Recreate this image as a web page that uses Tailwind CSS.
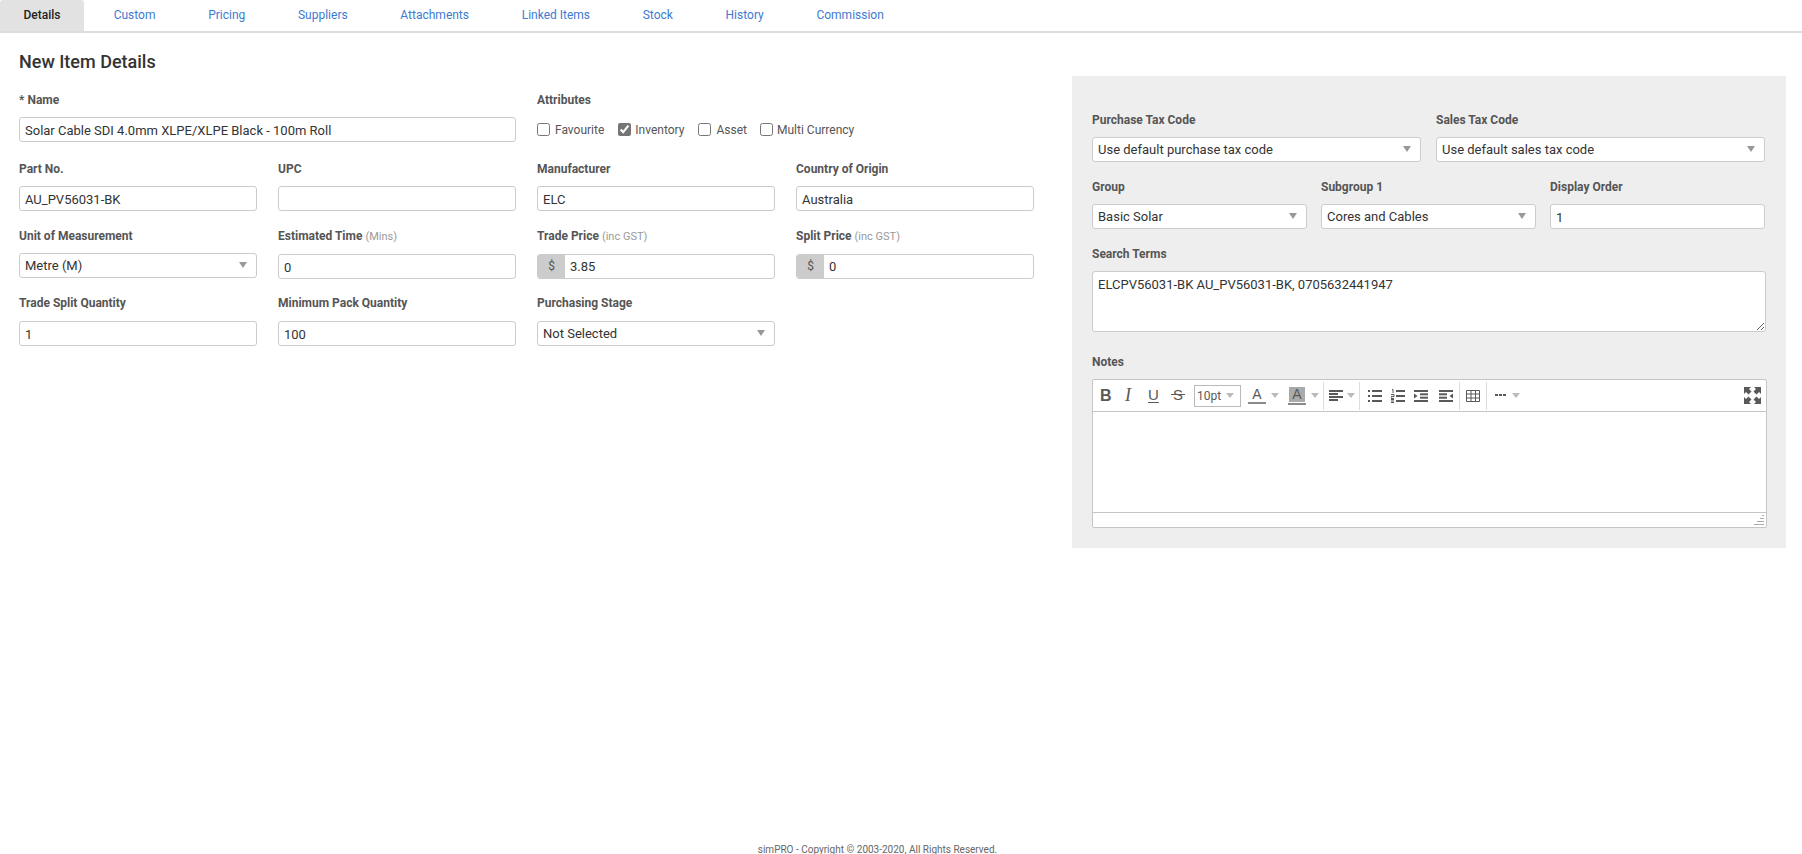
<!DOCTYPE html>
<html lang="en">
<head>
    <meta charset="UTF-8">
    <title>New Item Details</title>
    <script src="https://cdn.jsdelivr.net/npm/@tailwindcss/browser@4"></script>
</head>
<body class="bg-white font-['Roboto',sans-serif] text-[13px] text-[#333]">
<div class="flex flex-col h-[854px] overflow-hidden">

    <!-- tabs -->
    <nav class="flex h-[33px] border-b-2 border-[#ddd] gap-[6.7px] text-[12px] text-[#3d7bd1]">
        <a class="w-[84px] text-center h-[31px] leading-[30px] bg-[#e2e2e2] rounded-t-[3px] text-[#222] font-medium">Details</a>
        <a class="px-[23px] leading-[30px]">Custom</a>
        <a class="px-[23px] leading-[30px]">Pricing</a>
        <a class="px-[23px] leading-[30px]">Suppliers</a>
        <a class="px-[23px] leading-[30px]">Attachments</a>
        <a class="px-[23px] leading-[30px]">Linked Items</a>
        <a class="px-[23px] leading-[30px]">Stock</a>
        <a class="px-[23px] leading-[30px]">History</a>
        <a class="px-[23px] leading-[30px]">Commission</a>
    </nav>

    <main class="flex items-start flex-1">
        <!-- left form -->
        <section class="w-[1015px] ml-[19px] shrink-0">
            <h1 class="text-[18px] leading-[24px] font-medium mt-[17px] mb-[18px]">New Item Details</h1>
            <div class="grid grid-cols-4 gap-x-[21px] gap-y-[17px]">
                <div class="col-span-2 mb-[2px]">
                    <label class="block text-[12px] leading-4 font-bold text-[#555] mb-[9px]">* Name</label>
                    <input class="block w-full h-[25px] px-[5px] pt-px border border-[#ccc] rounded-[3px] outline-none" value="Solar Cable SDI 4.0mm XLPE/XLPE Black - 100m Roll">
                </div>
                <div class="col-span-2 mb-[2px]">
                    <label class="block text-[12px] leading-4 font-bold text-[#555] mb-[9px]">Attributes</label>
                    <div class="flex items-center h-[25px] text-[12px] text-[#555]">
                        <input type="checkbox" class="mr-[5px]"><span class="mr-[14px]">Favourite</span>
                        <input type="checkbox" checked class="mr-[4px] accent-[#757575]"><span class="mr-[14px]">Inventory</span>
                        <input type="checkbox" class="mr-[5px]"><span class="mr-[13px]">Asset</span>
                        <input type="checkbox" class="mr-[4px]"><span>Multi Currency</span>
                    </div>
                </div>

                <div>
                    <label class="block text-[12px] leading-4 font-bold text-[#555] mb-[9px]">Part No.</label>
                    <input class="block w-full h-[25px] px-[5px] pt-px border border-[#ccc] rounded-[3px] outline-none" value="AU_PV56031-BK">
                </div>
                <div>
                    <label class="block text-[12px] leading-4 font-bold text-[#555] mb-[9px]">UPC</label>
                    <input class="block w-full h-[25px] px-[5px] pt-px border border-[#ccc] rounded-[3px] outline-none">
                </div>
                <div>
                    <label class="block text-[12px] leading-4 font-bold text-[#555] mb-[9px]">Manufacturer</label>
                    <input class="block w-full h-[25px] px-[5px] pt-px border border-[#ccc] rounded-[3px] outline-none" value="ELC">
                </div>
                <div>
                    <label class="block text-[12px] leading-4 font-bold text-[#555] mb-[9px]">Country of Origin</label>
                    <input class="block w-full h-[25px] px-[5px] pt-px border border-[#ccc] rounded-[3px] outline-none" value="Australia">
                </div>

                <div>
                    <label class="block text-[12px] leading-4 font-bold text-[#555] mb-[9px]">Unit of Measurement</label>
                    <div class="relative h-[25px] px-[5px] leading-[23px] border border-[#ccc] rounded-[3px]">Metre (M)<i class="absolute right-[9px] top-[8px] border-x-[4px] border-x-transparent border-t-[6px] border-t-[#999]"></i></div>
                </div>
                <div>
                    <label class="block text-[12px] leading-4 font-bold text-[#555] mb-[9px]">Estimated Time <span class="text-[11px] font-normal text-[#999]">(Mins)</span></label>
                    <input class="block w-full h-[25px] px-[5px] pt-px border border-[#ccc] rounded-[3px] outline-none" value="0">
                </div>
                <div>
                    <label class="block text-[12px] leading-4 font-bold text-[#555] mb-[9px]">Trade Price <span class="text-[11px] font-normal text-[#999]">(inc GST)</span></label>
                    <div class="flex h-[25px] border border-[#ccc] rounded-[3px] overflow-hidden">
                        <span class="w-[27px] bg-[#ccc] text-[#555] text-[12px] leading-[23px] text-center shrink-0">$</span>
                        <input class="w-full px-[5px] pt-px outline-none" value="3.85">
                    </div>
                </div>
                <div>
                    <label class="block text-[12px] leading-4 font-bold text-[#555] mb-[9px]">Split Price <span class="text-[11px] font-normal text-[#999]">(inc GST)</span></label>
                    <div class="flex h-[25px] border border-[#ccc] rounded-[3px] overflow-hidden">
                        <span class="w-[27px] bg-[#ccc] text-[#555] text-[12px] leading-[23px] text-center shrink-0">$</span>
                        <input class="w-full px-[5px] pt-px outline-none" value="0">
                    </div>
                </div>

                <div class="-mt-px">
                    <label class="block text-[12px] leading-4 font-bold text-[#555] mb-[10px]">Trade Split Quantity</label>
                    <input class="block w-full h-[25px] px-[5px] pt-px border border-[#ccc] rounded-[3px] outline-none" value="1">
                </div>
                <div class="-mt-px">
                    <label class="block text-[12px] leading-4 font-bold text-[#555] mb-[10px]">Minimum Pack Quantity</label>
                    <input class="block w-full h-[25px] px-[5px] pt-px border border-[#ccc] rounded-[3px] outline-none" value="100">
                </div>
                <div class="-mt-px">
                    <label class="block text-[12px] leading-4 font-bold text-[#555] mb-[10px]">Purchasing Stage</label>
                    <div class="relative h-[25px] px-[5px] leading-[23px] border border-[#ccc] rounded-[3px]">Not Selected<i class="absolute right-[9px] top-[8px] border-x-[4px] border-x-transparent border-t-[6px] border-t-[#999]"></i></div>
                </div>
            </div>
        </section>

        <!-- right panel -->
        <aside class="w-[714px] ml-[38px] mt-[43px] shrink-0 bg-[#eee] pt-[36px] pb-[20px] pl-[20px] pr-[21px]">
            <div class="grid grid-cols-2 gap-x-[15px]">
                <div>
                    <label class="block text-[12px] leading-4 font-bold text-[#555] mb-[9px]">Purchase Tax Code</label>
                    <div class="relative h-[25px] px-[5px] leading-[23px] bg-white border border-[#ccc] rounded-[3px]">Use default purchase tax code<i class="absolute right-[9px] top-[8px] border-x-[4px] border-x-transparent border-t-[6px] border-t-[#999]"></i></div>
                </div>
                <div>
                    <label class="block text-[12px] leading-4 font-bold text-[#555] mb-[9px]">Sales Tax Code</label>
                    <div class="relative h-[25px] px-[5px] leading-[23px] bg-white border border-[#ccc] rounded-[3px]">Use default sales tax code<i class="absolute right-[9px] top-[8px] border-x-[4px] border-x-transparent border-t-[6px] border-t-[#999]"></i></div>
                </div>
            </div>
            <div class="grid grid-cols-3 gap-x-[14px] mt-[17px]">
                <div>
                    <label class="block text-[12px] leading-4 font-bold text-[#555] mb-[9px]">Group</label>
                    <div class="relative h-[25px] px-[5px] leading-[23px] bg-white border border-[#ccc] rounded-[3px]">Basic Solar<i class="absolute right-[9px] top-[8px] border-x-[4px] border-x-transparent border-t-[6px] border-t-[#999]"></i></div>
                </div>
                <div>
                    <label class="block text-[12px] leading-4 font-bold text-[#555] mb-[9px]">Subgroup 1</label>
                    <div class="relative h-[25px] px-[5px] leading-[23px] bg-white border border-[#ccc] rounded-[3px]">Cores and Cables<i class="absolute right-[9px] top-[8px] border-x-[4px] border-x-transparent border-t-[6px] border-t-[#999]"></i></div>
                </div>
                <div>
                    <label class="block text-[12px] leading-4 font-bold text-[#555] mb-[9px]">Display Order</label>
                    <input class="block w-full h-[25px] px-[5px] pt-px border border-[#ccc] rounded-[3px] bg-white outline-none" value="1">
                </div>
            </div>
            <div class="mt-[17px]">
                <label class="block text-[12px] leading-4 font-bold text-[#555] mb-[9px]">Search Terms</label>
                <textarea class="block w-[674px] h-[61px] px-[5px] py-[3px] border border-[#ccc] rounded-[3px] bg-white outline-none">ELCPV56031-BK AU_PV56031-BK, 0705632441947</textarea>
            </div>
            <div class="mt-[22px]">
                <label class="block text-[12px] leading-4 font-bold text-[#555] mb-[9px]">Notes</label>
                <!-- tinymce style editor -->
                <div class="w-[675px] bg-white border border-[#c5c5c5] rounded-[2px]">
                    <div class="flex items-center h-[32px] border-b border-[#c5c5c5] text-[#595959] pl-[7px] pr-[5px]">
                        <span class="w-[24px] font-['Liberation_Sans',sans-serif] text-[16px] font-bold">B</span>
                        <span class="w-[24px] font-['Liberation_Serif',serif] text-[18px] italic pl-[1px]">I</span>
                        <span class="w-[23px] font-['Liberation_Sans',sans-serif] text-[15px] underline underline-offset-2">U</span>
                        <span class="relative w-[23px] font-['Liberation_Sans',sans-serif] text-[15px] pl-[2px]">S<i class="absolute left-0 top-[10px] w-[14px] h-px bg-[#595959]"></i></span>
                        <div class="flex items-center justify-between w-[47px] h-[22px] px-[2px] pr-[6px] border border-[#bbb] text-[12px]"><span>10pt</span><i class="border-x-[4px] border-x-transparent border-t-[5px] border-t-[#bbb]"></i></div>
                        <div class="flex flex-col items-center w-[18px] ml-[7px] text-[14px] leading-[15px] font-['Liberation_Sans',sans-serif]"><span>A</span><i class="w-full h-[2px] bg-[#8a8a8a]"></i></div>
                        <i class="ml-[5px] border-x-[4px] border-x-transparent border-t-[5px] border-t-[#bbb]"></i>
                        <div class="flex flex-col items-center w-[18px] ml-[9px] text-[14px] leading-[15px] font-['Liberation_Sans',sans-serif]"><span class="w-[16px] bg-[#aaa] text-center">A</span><i class="w-full h-[2px] mt-[1px] bg-[#8a8a8a]"></i></div>
                        <i class="ml-[5px] border-x-[4px] border-x-transparent border-t-[5px] border-t-[#bbb]"></i>
                        <i class="w-px h-[28px] bg-[#ddd] ml-[4px]"></i>

                        <svg class="ml-[5px]" width="15" height="12" viewBox="0 0 15 12" fill="#595959"><rect width="14" height="2"/><rect y="3" width="9" height="2" /><rect y="6" width="14" height="2"/><rect y="9" width="9" height="2"/></svg>
                        <i class="ml-[3px] border-x-[4px] border-x-transparent border-t-[5px] border-t-[#bbb]"></i>
                        <i class="w-px h-[28px] bg-[#ddd] ml-[4px]"></i>

                        <svg class="ml-[8px]" width="15" height="12" viewBox="0 0 15 12" fill="#595959"><rect width="2" height="2"/><rect x="4" width="10" height="2"/><rect y="5" width="2" height="2"/><rect x="4" y="5" width="10" height="2"/><rect y="10" width="2" height="2"/><rect x="4" y="10" width="10" height="2"/></svg>
                        <svg class="ml-[8px]" width="14" height="14" viewBox="0 0 14 14" fill="none" stroke="#595959" stroke-width="1"><path d="M1 .5H2V4"/><path d="M0 5.5H3V7.5H0V9.5H3"/><path d="M0 10.5H3M0 12H3M0 13.5H3"/><path d="M5 2H14M5 7H14M5 12H14" stroke-width="2"/></svg>
                        <svg class="ml-[9px]" width="14" height="12" viewBox="0 0 14 12" fill="#595959"><rect width="14" height="2"/><rect x="6" y="3.3" width="8" height="2"/><rect x="6" y="6.7" width="8" height="2"/><rect y="10" width="14" height="2"/><path d="M0 3.5L3.5 6L0 8.5Z"/></svg>
                        <svg class="ml-[11px]" width="14" height="12" viewBox="0 0 14 12" fill="#595959"><rect width="14" height="2"/><rect y="3.3" width="8" height="2"/><rect y="6.7" width="8" height="2"/><rect y="10" width="14" height="2"/><path d="M14 3.5L10.5 6L14 8.5Z"/></svg>
                        <i class="w-px h-[28px] bg-[#ddd] ml-[6px]"></i>

                        <svg class="ml-[6px]" width="14" height="12" viewBox="0 0 14 12" fill="none" stroke="#595959"><path d="M.5 .5H13.5V11.5H.5Z"/><path d="M.5 4H13.5M.5 8H13.5M5 .5V11.5M9.5 .5V11.5"/></svg>
                        <i class="w-px h-[28px] bg-[#ddd] ml-[6px]"></i>

                        <svg class="ml-[8px]" width="11" height="3" viewBox="0 0 11 3" fill="#595959"><rect width="3" height="2"/><rect x="4" width="3" height="2"/><rect x="8" width="3" height="2"/></svg>
                        <i class="ml-[6px] border-x-[4px] border-x-transparent border-t-[5px] border-t-[#bbb]"></i>

                        <svg class="ml-auto" width="17" height="17" viewBox="0 0 17 17" fill="#595959"><path d="M0 0H7L5 2L7.5 4.5L4.5 7.5L2 5L0 7Z"/><path d="M17 0H10L12 2L9.5 4.5L12.5 7.5L15 5L17 7Z"/><path d="M0 17H7L5 15L7.5 12.5L4.5 9.5L2 12L0 10Z"/><path d="M17 17H10L12 15L9.5 12.5L12.5 9.5L15 12L17 10Z"/></svg>
                    </div>
                    <div class="h-[100px]"></div>
                    <div class="flex justify-end items-end h-[15px] border-t border-[#c5c5c5] pr-[2px] pb-[2px]">
                        <svg width="10" height="10" viewBox="0 0 10 10" stroke="#aaa" stroke-width="1"><path d="M8 .5H10M6 3.5H10M3 6.5H10M0 9.5H10"/></svg>
                    </div>
                </div>
            </div>
        </aside>
    </main>

    <footer class="text-center text-[10px] leading-[12px] text-[#666] pr-[47px] -mb-[2px]">simPRO - Copyright © 2003-2020, All Rights Reserved.</footer>
</div>
</body>
</html>
